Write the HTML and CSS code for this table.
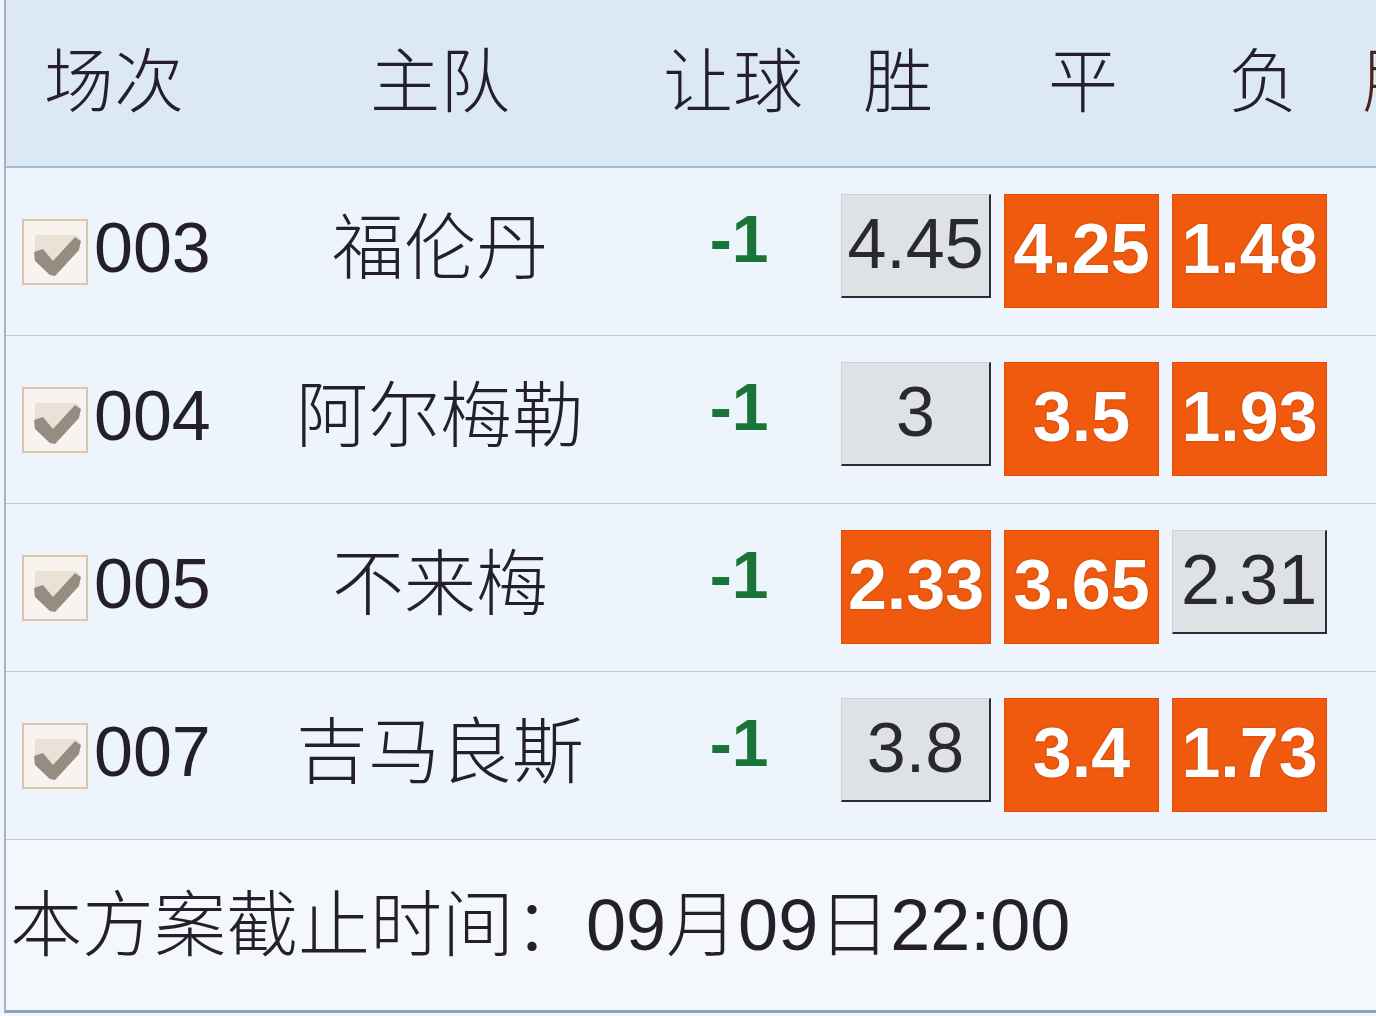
FILE: index.html
```html
<!DOCTYPE html>
<html lang="zh-CN">
<head>
<meta charset="utf-8">
<title>方案</title>
<link rel="stylesheet" href="styles.css">
</head>
<body>
<div class="panel">
  <div class="grid head">
    <div class="h1">场次</div>
    <div class="h2">主队</div>
    <div class="h3">让球</div>
    <div class="h4">胜</div>
    <div class="h5">平</div>
    <div class="h6">负</div>
    <div class="h7">胆</div>
  </div>

  <div class="grid row">
    <div class="c1"><svg class="chk" viewBox="0 0 66 66" width="66" height="66"><rect x="1" y="1" width="64" height="64" fill="#f8f3ee" stroke="#dcc4ae" stroke-width="2"/><path d="M13 16 H54 L58 20 L33 50 L13 34 Z" fill="#ebe1d7"/><path d="M12 33 L21 30 L31 42 L53 18 L59 22 L57 31 L33 57 L28 56 L13 42 Z" fill="#978c82"/></svg><span class="no">003</span></div>
    <div class="c2">福伦丹</div>
    <div class="c3">-1</div>
    <div class="c4"><div class="odd">4.45</div></div>
    <div class="c5"><div class="odd hot">4.25</div></div>
    <div class="c6"><div class="odd hot">1.48</div></div>
  </div>

  <div class="grid row">
    <div class="c1"><svg class="chk" viewBox="0 0 66 66" width="66" height="66"><rect x="1" y="1" width="64" height="64" fill="#f8f3ee" stroke="#dcc4ae" stroke-width="2"/><path d="M13 16 H54 L58 20 L33 50 L13 34 Z" fill="#ebe1d7"/><path d="M12 33 L21 30 L31 42 L53 18 L59 22 L57 31 L33 57 L28 56 L13 42 Z" fill="#978c82"/></svg><span class="no">004</span></div>
    <div class="c2">阿尔梅勒</div>
    <div class="c3">-1</div>
    <div class="c4"><div class="odd">3</div></div>
    <div class="c5"><div class="odd hot">3.5</div></div>
    <div class="c6"><div class="odd hot">1.93</div></div>
  </div>

  <div class="grid row">
    <div class="c1"><svg class="chk" viewBox="0 0 66 66" width="66" height="66"><rect x="1" y="1" width="64" height="64" fill="#f8f3ee" stroke="#dcc4ae" stroke-width="2"/><path d="M13 16 H54 L58 20 L33 50 L13 34 Z" fill="#ebe1d7"/><path d="M12 33 L21 30 L31 42 L53 18 L59 22 L57 31 L33 57 L28 56 L13 42 Z" fill="#978c82"/></svg><span class="no">005</span></div>
    <div class="c2">不来梅</div>
    <div class="c3">-1</div>
    <div class="c4"><div class="odd hot">2.33</div></div>
    <div class="c5"><div class="odd hot">3.65</div></div>
    <div class="c6"><div class="odd">2.31</div></div>
  </div>

  <div class="grid row">
    <div class="c1"><svg class="chk" viewBox="0 0 66 66" width="66" height="66"><rect x="1" y="1" width="64" height="64" fill="#f8f3ee" stroke="#dcc4ae" stroke-width="2"/><path d="M13 16 H54 L58 20 L33 50 L13 34 Z" fill="#ebe1d7"/><path d="M12 33 L21 30 L31 42 L53 18 L59 22 L57 31 L33 57 L28 56 L13 42 Z" fill="#978c82"/></svg><span class="no">007</span></div>
    <div class="c2">吉马良斯</div>
    <div class="c3">-1</div>
    <div class="c4"><div class="odd">3.8</div></div>
    <div class="c5"><div class="odd hot">3.4</div></div>
    <div class="c6"><div class="odd hot">1.73</div></div>
  </div>

  <div class="foot">本方案截止时间：09月09日22:00</div>
</div>
</body>
</html>
```

FILE: styles.css
```css
* {
  box-sizing: border-box;
  margin: 0;
  padding: 0;
}

html,
body {
  width: 1376px;
  height: 1016px;
  overflow: hidden;
  background: #f1f5f9;
}

body {
  font-family: "Liberation Sans", "Noto Sans CJK SC", sans-serif;
  font-weight: 300;
  color: #241f2b;
  line-height: 1;
}

.panel {
  margin-left: 4px;
  width: 1500px;
  border-left: 2px solid #a3b3c9;
  border-bottom: 3px solid #8aa3b8;
}

.grid {
  display: grid;
  grid-template-columns: 284px 300px 246px 161px 168px 175px 1fr;
}

/* header */
.head {
  height: 168px;
  background: #dce8f4;
  border-bottom: 2px solid #a2c1d3;
  font-size: 70px;
  align-items: center;
  white-space: nowrap;
}

.h1 { padding-left: 38px; }
.h2 { padding-left: 80px; }
.h3 { padding-left: 73px; }
.h4 { padding-left: 27px; }
.h5 { padding-left: 51px; }
.h6 { padding-left: 63px; }
.h7 { padding-left: 22px; color: #4a2319; }

/* rows */
.row {
  height: 168px;
  background: #edf4fb;
  border-bottom: 1px solid #bcc6d0;
  align-items: center;
  font-size: 70px;
  white-space: nowrap;
}

.c1 {
  display: flex;
  align-items: center;
  padding-left: 16px;
  padding-bottom: 8px;
}

.chk {
  display: block;
  flex: none;
  margin-top: 8px;
}

.no {
  margin-left: 6px;
}

.c2 {
  text-align: center;
  font-size: 72px;
  padding-bottom: 8px;
}

.c3 {
  padding-left: 52px;
  padding-bottom: 26px;
  text-align: center;
  color: #197537;
  font-weight: bold;
  font-size: 66px;
}

.c4,
.c5,
.c6 {
  align-self: start;
  margin-top: 26px;
}

.c4 { padding: 0 6px 0 5px; }
.c5 { padding: 0 6px 0 7px; }
.c6 { padding: 0 13px 0 7px; }

.odd {
  height: 104px;
  display: flex;
  align-items: center;
  justify-content: center;
  padding-bottom: 4px;
  background: #dfe2e5;
  border-top: 1px solid #cdd2d7;
  border-left: 1px solid #cdd2d7;
  border-right: 2px solid #2b2b3b;
  border-bottom: 2px solid #2b2b3b;
  color: #2a2833;
  font-size: 70px;
}

.odd.hot {
  height: 114px;
  background: #f05a0e;
  border: 1px solid #e04c06;
  color: #ffffff;
  font-weight: bold;
  text-shadow: 0 0 2px rgba(110, 30, 0, 0.55);
}

/* footer */
.foot {
  height: 170px;
  background: #f4f8fc;
  display: flex;
  align-items: center;
  padding-left: 4px;
  font-size: 72px;
  white-space: nowrap;
}
```
